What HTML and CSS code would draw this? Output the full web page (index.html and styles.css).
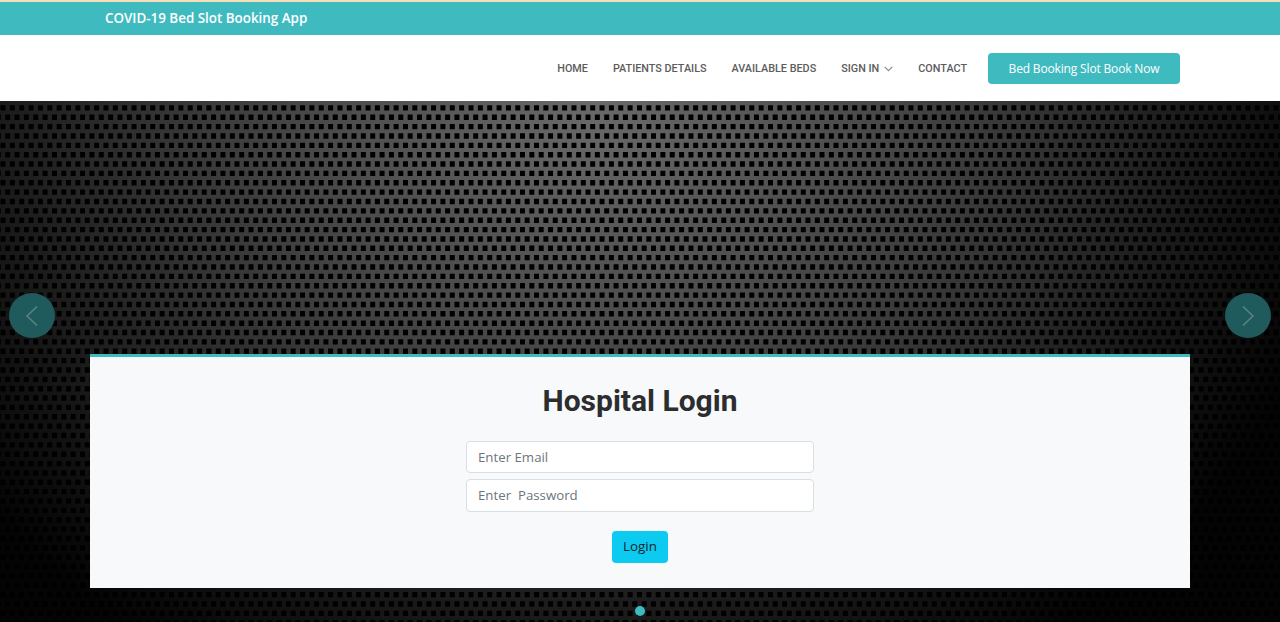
FILE: index.html
```html
<!DOCTYPE html>
<html lang="en">
<head>
<meta charset="utf-8">
<title>COVID-19 Bed Slot Booking App</title>
<link rel="stylesheet" href="styles.css">
</head>
<body>
<div class="topbar"><strong class="brand">COVID-19 Bed Slot Booking App</strong></div>
<header class="header">
  <nav class="nav">
    <a class="home">HOME</a>
    <a class="patients">PATIENTS DETAILS</a>
    <a class="beds">AVAILABLE BEDS</a>
    <a class="signin">SIGN IN
      <svg class="caret" width="9" height="6" viewBox="0 0 9 6"><path d="M.7 .8 4.5 4.6 8.3 .8" fill="none" stroke="currentColor" stroke-width="1.2"/></svg>
    </a>
    <a class="contact">CONTACT</a>
  </nav>
  <a class="book">Bed Booking Slot Book Now</a>
</header>
<main class="hero">
  <!-- Perforated metal: two dashed rows, doubled until they fill the hero -->
  <svg class="mesh" width="1280" height="521" aria-hidden="true">
    <defs>
      <path id="r2" d="M.5 6.9H1290M-4.18 16.26H1290" stroke="#000" stroke-width="5.4" stroke-dasharray="5 4.36"/>
      <g id="r4"><use href="#r2"/><use href="#r2" y="18.72"/></g>
      <g id="r8"><use href="#r4"/><use href="#r4" y="37.44"/></g>
      <g id="r16"><use href="#r8"/><use href="#r8" y="74.88"/></g>
      <g id="r32"><use href="#r16"/><use href="#r16" y="149.76"/></g>
    </defs>
    <use href="#r32"/><use href="#r32" y="299.52"/>
  </svg>
  <button class="arrow prev" aria-label="Previous"><svg width="14" height="22" viewBox="0 0 14 22"><path d="M12 1.5 2 11 12 20.5" fill="none" stroke="currentColor" stroke-width="1.4"/></svg></button>
  <button class="arrow next" aria-label="Next"><svg width="14" height="22" viewBox="0 0 14 22"><path d="M2 1.5 12 11 2 20.5" fill="none" stroke="currentColor" stroke-width="1.4"/></svg></button>
  <section class="panel">
    <h2 class="title">Hospital Login</h2>
    <form class="form">
      <input class="field" type="email" placeholder="Enter Email">
      <input class="field" type="password" placeholder="Enter  Password">
      <button class="login" type="button">Login</button>
    </form>
  </section>
  <span class="dot"></span>
</main>
</body>
</html>
```
FILE: styles.css
```css
* { box-sizing: border-box; }
body {
  margin: 0;
  width: 1280px;
  height: 622px;
  overflow: hidden;
  font-family: "Open Sans", sans-serif;
  color: #444;
}
.topbar {
  height: 35px;
  padding: 0 0 2px 105px;
  border-top: 2px solid #f5dfb8;
  background: #3fbbc0;
  color: #fff;
  display: flex;
  align-items: center;
}
.brand { font-size: 13.4px; font-weight: 600; line-height: 20px; }
.header {
  height: 66px;
  padding-right: 100px;
  display: flex;
  align-items: center;
  justify-content: flex-end;
  background: #fff;
}
.nav {
  display: flex;
  gap: 25px;
  margin-right: 21px;
  padding-top: 1px;
  font: 500 10.82px/16px Roboto, sans-serif;
  color: #5c5c5c;
  white-space: nowrap;
}
.signin { display: flex; align-items: center; gap: 5px; }
.caret { color: #888; }
.book {
  width: 192px;
  height: 31px;
  border-radius: 4px;
  background: #3fbbc0;
  color: #fff;
  font-size: 12px;
  letter-spacing: -0.16px;
  line-height: 32px;
  text-align: center;
}
.hero {
  position: relative;
  height: 521px;
  padding-top: 253px;
  background: radial-gradient(ellipse 730px 630px at 595px 0, #6a6a6a 0, #4e4e4e 33%, #363636 58%, #181818 84%, #040404 105%);
}
.mesh { position: absolute; inset: 0; }
.arrow {
  position: absolute;
  top: 192px;
  width: 46px;
  height: 45px;
  padding: 0;
  border: 0;
  border-radius: 50%;
  background: #1f5b5d;
  color: #5f8586;
  display: grid;
  place-items: center;
}
.prev { left: 9px; }
.next { right: 9px; }
.panel {
  position: relative;
  width: 1100px;
  height: 234px;
  margin: 0 auto;
  padding-top: 27px;
  border-top: 3px solid #3fbbc0;
  background: #f7f9fb;
}
.title {
  margin: 0 0 23px;
  font: 700 30px/34px Roboto, sans-serif;
  color: #2b2d2e;
  text-align: center;
}
.form {
  width: 348px;
  margin: 0 auto;
  display: flex;
  flex-direction: column;
  align-items: center;
  gap: 6px;
}
.field {
  width: 100%;
  height: 32px;
  padding: 0 11px 1px;
  border: 1px solid #dadfe3;
  border-radius: 4px;
  background: #fff;
  font: 13.25px "Open Sans", sans-serif;
}
.field + .field { height: 33px; }
.field::placeholder { color: #6c757d; opacity: 1; white-space: pre; }
.login {
  width: 56px;
  height: 32px;
  margin-top: 13px;
  padding: 0 0 2px;
  border: 0;
  border-radius: 4px;
  background: #0dcaf0;
  color: #10262c;
  font: 13.4px "Open Sans", sans-serif;
}
.dot {
  position: absolute;
  left: 635px;
  top: 505px;
  width: 10px;
  height: 10px;
  border-radius: 50%;
  background: #3fbbc0;
}
```
